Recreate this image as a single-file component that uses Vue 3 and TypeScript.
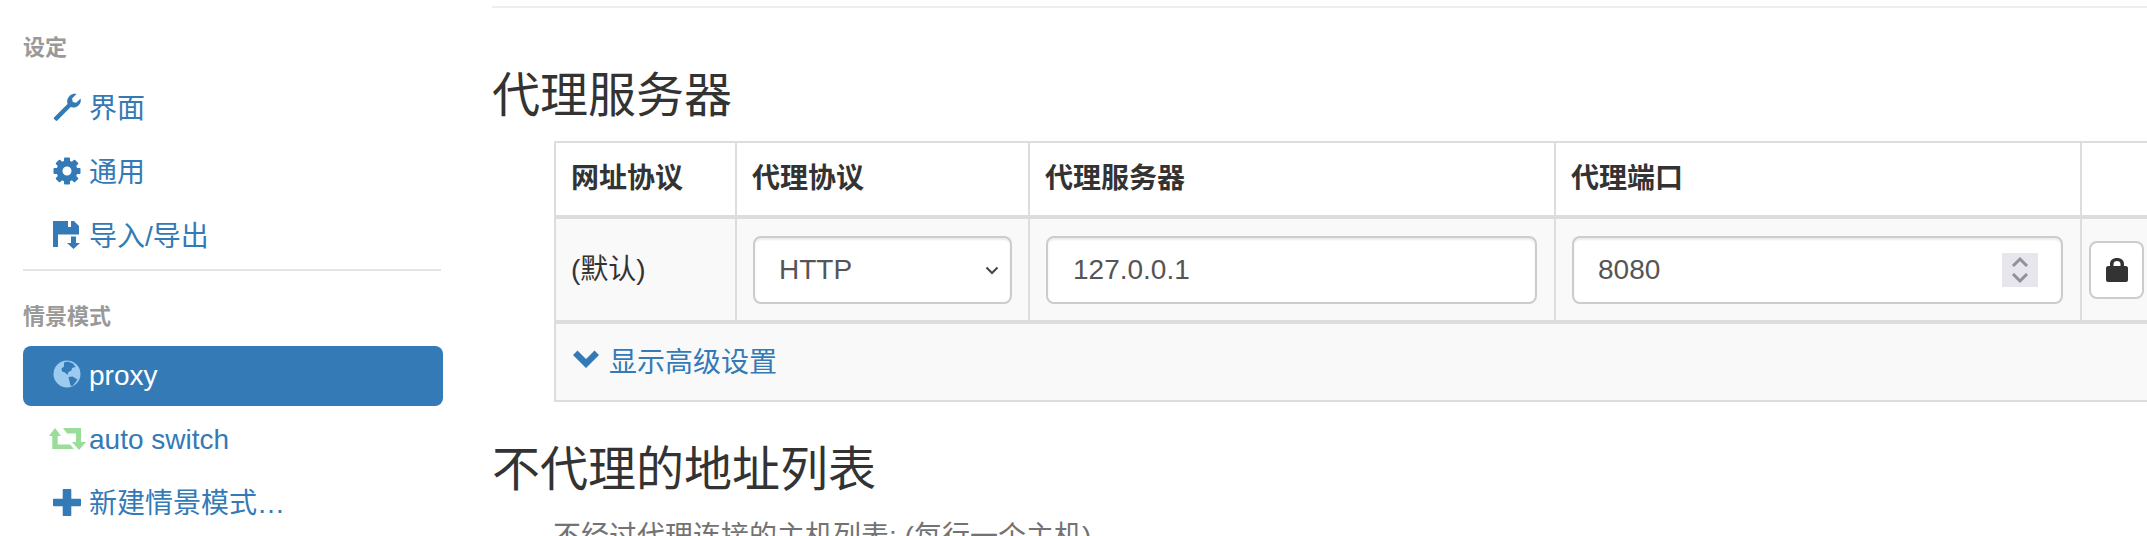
<script setup lang="ts">
interface NavItem {
  label: string
  icon: string
  active?: boolean
}

const settingsItems: NavItem[] = [
  { label: '界面', icon: 'wrench' },
  { label: '通用', icon: 'cog' },
  { label: '导入/导出', icon: 'save' },
]

const profileItems: NavItem[] = [
  { label: 'proxy', icon: 'globe', active: true },
  { label: 'auto switch', icon: 'retweet' },
  { label: '新建情景模式…', icon: 'plus' },
]

const cogTeeth = [0, 45, 90, 135, 180, 225, 270, 315]
</script>

<template>
  <div class="page">
    <aside class="sidebar">
      <template v-for="(group, i) in [settingsItems, profileItems]" :key="i">
        <div v-if="i > 0" class="divider"></div>
        <div class="nav-header" :class="{ top: i === 0 }">{{ i === 0 ? '设定' : '情景模式' }}</div>
        <ul class="nav">
          <li v-for="item in group" :key="item.label" :class="{ active: item.active }">
            <svg class="icon" :class="`icon-${item.icon}`" viewBox="0 0 28 28">
              <path
                v-if="item.icon === 'wrench'"
                d="M1 24.500 14.500 11c-1-3.500 0-6.500 2.500-8.600C19 .9 21.300.5 23.500 1L19 5.500l.8 3.400 3.300.9L27.600 5.400c.6 2.500 0 5-1.900 6.900-2.200 2.100-5.100 2.900-8 1.800L4.300 27.500c-.5.500-1.100.5-1.600 0L1 25.900c-.4-.4-.4-1 0-1.400z"
              />
              <g v-else-if="item.icon === 'cog'">
                <circle cx="14" cy="14" r="7.500" fill="none" stroke="currentColor" stroke-width="6" />
                <rect
                  v-for="deg in cogTeeth"
                  :key="deg"
                  x="11"
                  y="0.500"
                  width="6"
                  height="6"
                  rx="1"
                  :transform="`rotate(${deg} 14 14)`"
                />
              </g>
              <path
                v-else-if="item.icon === 'save'"
                d="M0 0H15V6H18V0H21L26 5V13.500H5V26H0ZM18 15.500H23V22H27L20.500 28 14 22H18Z"
              />
              <g v-else-if="item.icon === 'globe'">
                <circle class="globe-sea" cx="14" cy="14" r="13.500" />
                <path
                  class="globe-land"
                  d="M11 2.500 15 1.500 20 3.500 22.500 7 19 8 18.500 10.500 15.500 12 14.500 15 12 12.500 9 11.500 8.500 8.500 11 6.500ZM15.500 17 19.500 16.500 24.500 19.500 22 23 19.500 26 17.500 25.500 16.500 21.500Z"
                />
              </g>
              <path
                v-else-if="item.icon === 'retweet'"
                d="M2 4 8 12H4.700V20.500H17L21 25H-.7V12H-4ZM10 4H28V18H33L26 26 19 18H23V9.500H14Z"
              />
              <path
                v-else
                d="M10.500 1h7c.5 0 .8.3.8.8v8.900h8.900c.5 0 .8.3.8.8v6c0 .5-.3.8-.8.8h-8.900v8.900c0 .5-.3.8-.8.8h-7c-.5 0-.8-.3-.8-.8v-8.900H.8c-.5 0-.8-.3-.8-.8v-6c0-.5.3-.8.8-.8h8.900V1.800c0-.5.3-.8.8-.8z"
              />
            </svg>
            <span>{{ item.label }}</span>
          </li>
        </ul>
      </template>
    </aside>

    <main class="content">
      <div class="rule"></div>
      <h3 class="first">代理服务器</h3>
      <table class="servers">
        <colgroup>
          <col style="width: 181px" />
          <col style="width: 293px" />
          <col style="width: 526px" />
          <col style="width: 526px" />
          <col style="width: 90px" />
        </colgroup>
        <thead>
          <tr>
            <th>网址协议</th>
            <th>代理协议</th>
            <th>代理服务器</th>
            <th>代理端口</th>
            <th></th>
          </tr>
        </thead>
        <tbody>
          <tr class="row">
            <td>(默认)</td>
            <td class="control select-cell">
              <div class="select-wrap">
                <select class="field tight">
                  <option>HTTP</option>
                </select>
                <svg class="caret" viewBox="0 0 14 9">
                  <path d="M1.500 1.500 7 7l5.500-5.500" />
                </svg>
              </div>
            </td>
            <td class="control"><input class="field" type="text" value="127.0.0.1" /></td>
            <td class="control">
              <div class="port-wrap">
                <input class="field tight" type="text" value="8080" />
                <div class="spinner">
                  <svg viewBox="0 0 36 34">
                    <path d="M11 13 18 6l7 7M11 21l7 7 7-7" />
                  </svg>
                </div>
              </div>
            </td>
            <td class="lock-cell">
              <button class="lock-btn" type="button" aria-label="lock">
                <svg viewBox="0 0 22 24">
                  <path
                    fill-rule="evenodd"
                    d="M4 8V6C4 2.500 6.500 0 11 0s7 2.500 7 6V8h2c1 0 2 1 2 2v12c0 1-1 2-2 2H2c-1 0-2-1-2-2V10c0-1 1-2 2-2h2zm3.500 0h7V6c0-2-1.500-3-3.500-3S7.500 4 7.500 6v2z"
                  />
                </svg>
              </button>
            </td>
          </tr>
          <tr class="row">
            <td colspan="5" class="advanced">
              <svg viewBox="0 0 26 18">
                <path d="M0 5 4.500.5 13 9 21.500.5 26 5 13 18z" />
              </svg>
              <span>显示高级设置</span>
            </td>
          </tr>
        </tbody>
      </table>
      <h3 class="second">不代理的地址列表</h3>
      <p class="help">不经过代理连接的主机列表: (每行一个主机)</p>
    </main>
  </div>
</template>

<style>
html,
body {
  margin: 0;
  height: 536px;
  overflow: hidden;
  background: #fff;
}
</style>

<style scoped>
.page {
  display: flex;
  width: 2147px;
  height: 536px;
  overflow: hidden;
  font-family: "Liberation Sans", "Noto Sans CJK SC", sans-serif;
  font-size: 28px;
  line-height: 38px;
  color: #333;
}

.sidebar {
  flex: none;
  box-sizing: border-box;
  width: 492px;
  padding: 29px 49px 0 23px;
}

.nav-header {
  font-size: 22px;
  font-weight: 700;
  line-height: 38px;
  color: #999;
  height: 38px;
  margin-bottom: 10px;
}

.nav-header.top {
  margin-bottom: 12px;
}

.nav {
  list-style: none;
  margin: 0;
  padding: 0;
  display: flex;
  flex-direction: column;
  gap: 4px;
}

.nav li {
  display: flex;
  align-items: center;
  height: 60px;
  padding-left: 30px;
  border-radius: 8px;
  color: #337ab7;
}

.nav li.active {
  background: #337ab7;
  color: #fff;
}

.icon {
  flex: none;
  width: 28px;
  height: 28px;
  margin-right: 8px;
  margin-top: -4px;
  fill: currentColor;
  overflow: visible;
}

.icon-retweet {
  fill: #99dd99;
}

.globe-sea {
  fill: #9ccbf0;
}

.globe-land {
  fill: #337ab7;
}

.divider {
  height: 2px;
  width: 418px;
  background: #e5e5e5;
  margin: 2px 0 27px;
}

.content {
  flex: none;
  width: 1655px;
  padding-top: 6px;
}

.rule {
  height: 2px;
  background: #eee;
}

h3 {
  margin: 0;
  font-size: 48px;
  font-weight: 400;
  line-height: 50px;
}

h3.first {
  margin-top: 63px;
  margin-bottom: 20px;
}

h3.second {
  margin-top: 43px;
}

.servers {
  margin-left: 62px;
  table-layout: fixed;
  width: 1616px;
  border-collapse: collapse;
}

.servers th,
.servers td {
  border: 2px solid #ddd;
  padding: 0 15px;
  text-align: left;
}

.servers th {
  height: 72px;
  font-weight: 700;
  border-bottom-width: 4px;
}

.row td {
  background: #f9f9f9;
  height: 101px;
  border-bottom-width: 4px;
}

.row + .row td {
  height: 74px;
  border-bottom-width: 2px;
}

.servers .control {
  padding: 0 17px 0 16px;
}

.servers .select-cell {
  padding-right: 16px;
}

.field {
  box-sizing: border-box;
  display: block;
  width: 100%;
  height: 68px;
  padding: 0 25px;
  font: inherit;
  color: #555;
  background: #fff;
  border: 2px solid #ccc;
  border-radius: 8px;
  box-shadow: inset 0 2px 2px rgba(0, 0, 0, 0.075);
  outline: none;
  appearance: none;
}

.field.tight {
  padding-left: 24px;
}

.select-wrap,
.port-wrap {
  position: relative;
}

.caret {
  position: absolute;
  right: 13px;
  top: 30px;
  width: 14px;
  height: 9px;
  fill: none;
  stroke: #444;
  stroke-width: 2;
}

.spinner {
  position: absolute;
  right: 25px;
  top: 17px;
  width: 36px;
  height: 34px;
  background: #e6e6ec;
}

.spinner svg {
  display: block;
  width: 36px;
  height: 34px;
  fill: none;
  stroke: #8f8f9d;
  stroke-width: 3;
}

.servers .lock-cell {
  padding: 0 0 0 7px;
}

.lock-btn {
  display: flex;
  align-items: center;
  justify-content: center;
  box-sizing: border-box;
  width: 55px;
  height: 58px;
  padding: 0;
  background: #fff;
  border: 2px solid #ccc;
  border-radius: 8px;
}

.lock-btn svg {
  width: 22px;
  height: 24px;
  fill: #333;
}

.servers .advanced {
  color: #337ab7;
  padding-top: 2px;
}

.advanced svg {
  width: 26px;
  height: 18px;
  margin: 0 10px 0 2px;
  fill: currentColor;
  vertical-align: 4px;
}

.help {
  margin: 23px 0 0 61px;
  color: #737373;
}
</style>
